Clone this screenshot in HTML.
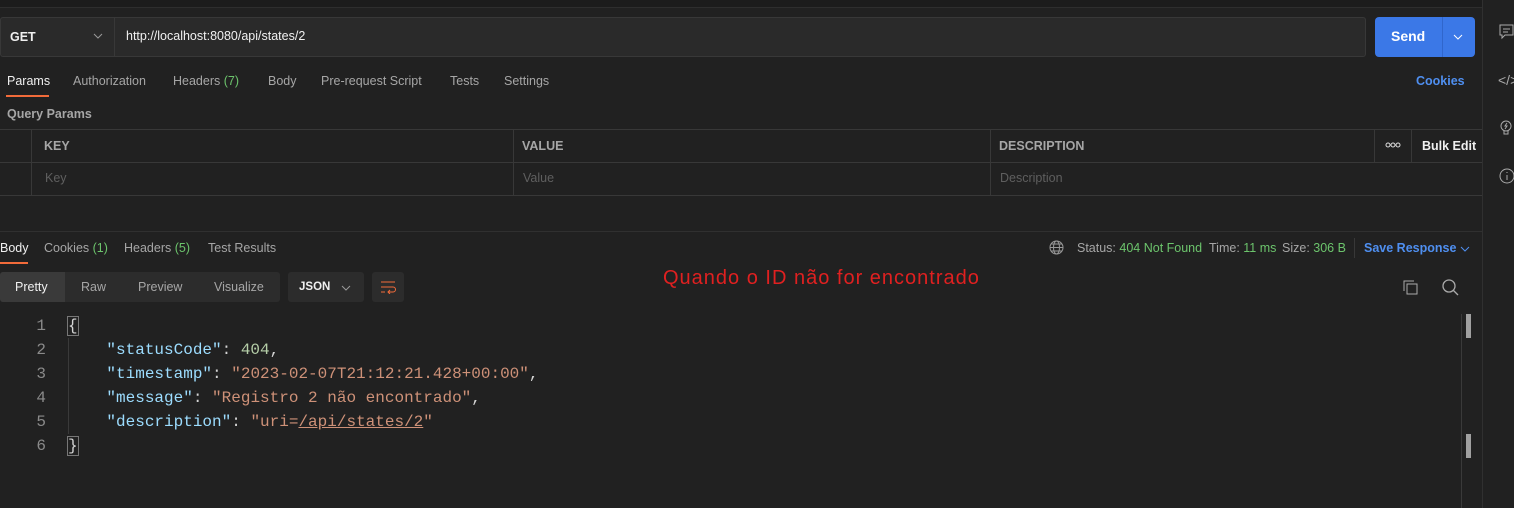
<!DOCTYPE html>
<html><head><meta charset="utf-8"><style>
*{margin:0;padding:0;box-sizing:border-box}
body{width:1514px;height:508px;background:#212121;font-family:"Liberation Sans",sans-serif;color:#a6a6a6;position:relative;overflow:hidden;font-size:12.5px}
.a{position:absolute;white-space:nowrap}
.w{color:#f0f0f0}
.g{color:#6cc46c}
.b{color:#4f8ff0}
.code{font-family:"Liberation Mono",monospace;font-size:16px;color:#9cdcfe}
.ln{color:#8a8a8a;width:46px;text-align:right}
.k{color:#9cdcfe}.s{color:#ce9178}.n{color:#b5cea8}
</style></head><body>
<div class="a" style="left:0;top:0;width:1482px;height:8px;background:#1c1c1c;border-bottom:1px solid #2e2e2e"></div>
<div class="a" style="left:1482px;top:0;width:1px;height:508px;background:#303030"></div>
<div class="a" style="left:0;top:17px;width:1366px;height:40px;background:#2a2a2a;border:1px solid #383838;border-radius:3px"></div>
<div class="a" style="left:114px;top:18px;width:1px;height:38px;background:#383838"></div>
<div class="a w" style="left:10px;top:30px;font-weight:bold;font-size:12.5px">GET</div>
<svg class="a" style="left:93px;top:32px" width="10" height="8"><path d="M1 2l4 4 4-4" stroke="#999" fill="none"/></svg>
<div class="a w" style="left:126px;top:29px;font-size:12.5px">http://localhost:8080/api/states/2</div>
<div class="a" style="left:1375px;top:17px;width:100px;height:40px;background:#3b78e7;border-radius:4px"></div>
<div class="a" style="left:1442px;top:17px;width:1px;height:40px;background:#3066cc"></div>
<div class="a" style="left:1391px;top:28px;color:#fff;font-weight:bold;font-size:14px">Send</div>
<svg class="a" style="left:1453px;top:33px" width="10" height="8"><path d="M1 2l4 4 4-4" stroke="#fff" fill="none"/></svg>
<div class="a w" style="left:7px;top:74px">Params</div>
<div class="a" style="left:6px;top:95px;width:43px;height:2px;background:#f26b3a"></div>
<div class="a" style="left:73px;top:74px">Authorization</div>
<div class="a" style="left:173px;top:74px">Headers <span class="g">(7)</span></div>
<div class="a" style="left:268px;top:74px">Body</div>
<div class="a" style="left:321px;top:74px">Pre-request Script</div>
<div class="a" style="left:450px;top:74px">Tests</div>
<div class="a" style="left:504px;top:74px">Settings</div>
<div class="a b" style="left:1416px;top:74px;font-weight:bold">Cookies</div>
<div class="a" style="left:7px;top:107px;font-weight:bold">Query Params</div>
<div class="a" style="left:0;top:129px;width:1482px;height:67px;border-top:1px solid #383838;border-bottom:1px solid #383838"></div>
<div class="a" style="left:0;top:162px;width:1482px;height:1px;background:#383838"></div>
<div class="a" style="left:31px;top:129px;width:1px;height:67px;background:#383838"></div>
<div class="a" style="left:513px;top:129px;width:1px;height:67px;background:#383838"></div>
<div class="a" style="left:990px;top:129px;width:1px;height:67px;background:#383838"></div>
<div class="a" style="left:1374px;top:129px;width:1px;height:33px;background:#383838"></div>
<div class="a" style="left:1411px;top:129px;width:1px;height:33px;background:#383838"></div>
<div class="a" style="left:44px;top:139px;font-weight:bold">KEY</div>
<div class="a" style="left:522px;top:139px;font-weight:bold">VALUE</div>
<div class="a" style="left:999px;top:139px;font-weight:bold">DESCRIPTION</div>
<svg class="a" style="left:1385px;top:142px" width="16" height="6" stroke="#ddd" fill="none"><circle cx="3" cy="3" r="2"/><circle cx="8" cy="3" r="2"/><circle cx="13" cy="3" r="2"/></svg>
<div class="a w" style="left:1422px;top:139px;font-weight:bold">Bulk Edit</div>
<div class="a" style="left:45px;top:171px;color:#5f5f5f">Key</div>
<div class="a" style="left:523px;top:171px;color:#5f5f5f">Value</div>
<div class="a" style="left:1000px;top:171px;color:#5f5f5f">Description</div>
<div class="a" style="left:0;top:231px;width:1482px;height:1px;background:#303030"></div>
<div class="a w" style="left:0;top:241px">Body</div>
<div class="a" style="left:0;top:262px;width:28px;height:2px;background:#f26b3a"></div>
<div class="a" style="left:44px;top:241px">Cookies <span class="g">(1)</span></div>
<div class="a" style="left:124px;top:241px">Headers <span class="g">(5)</span></div>
<div class="a" style="left:208px;top:241px">Test Results</div>
<svg class="a" style="left:1049px;top:240px" width="15" height="15" stroke="#999" fill="none"><circle cx="7.5" cy="7.5" r="6.5"/><ellipse cx="7.5" cy="7.5" rx="3" ry="6.5"/><path d="M1 7.5h13M2 4h11M2 11h11"/></svg>
<div class="a" style="left:1077px;top:241px">Status: <span class="g">404 Not Found</span></div>
<div class="a" style="left:1209px;top:241px">Time: <span class="g">11 ms</span></div>
<div class="a" style="left:1282px;top:241px">Size: <span class="g">306 B</span></div>
<div class="a" style="left:1354px;top:238px;width:1px;height:20px;background:#383838"></div>
<div class="a b" style="left:1364px;top:241px;font-weight:bold">Save Response</div>
<svg class="a" style="left:1460px;top:245px" width="10" height="8"><path d="M1 2l4 4 4-4" stroke="#4f8ff0" fill="none"/></svg>
<div class="a" style="left:0;top:272px;width:280px;height:30px;background:#2c2c2c;border-radius:3px"></div>
<div class="a" style="left:0;top:272px;width:65px;height:30px;background:#3a3a3a;border-radius:3px 0 0 3px"></div>
<div class="a w" style="left:15px;top:280px">Pretty</div>
<div class="a" style="left:81px;top:280px">Raw</div>
<div class="a" style="left:138px;top:280px">Preview</div>
<div class="a" style="left:214px;top:280px">Visualize</div>
<div class="a" style="left:288px;top:272px;width:76px;height:30px;background:#2c2c2c;border-radius:3px"></div>
<div class="a w" style="left:299px;top:281px;font-weight:bold;font-size:11.5px">JSON</div>
<svg class="a" style="left:341px;top:284px" width="10" height="8"><path d="M1 2l4 4 4-4" stroke="#999" fill="none"/></svg>
<div class="a" style="left:372px;top:272px;width:32px;height:30px;background:#2c2c2c;border-radius:3px"></div>
<svg class="a" style="left:380px;top:280px" width="16" height="14" stroke="#f26b3a" fill="none"><path d="M1 2h14M1 7h12a2.5 2.5 0 0 1 0 5H8M10 10l-2 2 2 2M1 12h4"/></svg>
<div class="a" style="left:663px;top:267px;color:#e02020;font-size:20px;letter-spacing:1px">Quando o ID não for encontrado</div>
<svg class="a" style="left:1403px;top:280px" width="16" height="16" stroke="#aaa" fill="none"><path d="M1 11V1h10"/><rect x="4" y="4" width="10" height="10"/></svg>
<svg class="a" style="left:1442px;top:279px" width="17" height="17" stroke="#aaa" fill="none" stroke-width="1.3"><circle cx="7" cy="7" r="6"/><path d="M11.5 11.5l4.5 4.5"/></svg>
<div class="a code ln" style="left:0;top:314px;line-height:24px">1<br>2<br>3<br>4<br>5<br>6</div>
<div class="a code" style="left:68px;top:314px;line-height:24px;color:#d4d4d4">
<div><span style="outline:1px solid #777">{</span></div>
<div>&nbsp;&nbsp;&nbsp;&nbsp;<span class="k">"statusCode"</span>: <span class="n">404</span>,</div>
<div>&nbsp;&nbsp;&nbsp;&nbsp;<span class="k">"timestamp"</span>: <span class="s">"2023-02-07T21:12:21.428+00:00"</span>,</div>
<div>&nbsp;&nbsp;&nbsp;&nbsp;<span class="k">"message"</span>: <span class="s">"Registro 2 não encontrado"</span>,</div>
<div>&nbsp;&nbsp;&nbsp;&nbsp;<span class="k">"description"</span>: <span class="s">"uri=<u>/api/states/2</u>"</span></div>
<div><span style="outline:1px solid #777">}</span></div>
</div>
<div class="a" style="left:68px;top:338px;width:1px;height:96px;background:#3a3a3a"></div>
<div class="a" style="left:1461px;top:314px;width:1px;height:194px;background:#3a3a3a"></div>
<div class="a" style="left:1466px;top:314px;width:5px;height:24px;background:#a0a0a0"></div>
<div class="a" style="left:1466px;top:434px;width:5px;height:24px;background:#a0a0a0"></div>
<svg class="a" style="left:1499px;top:24px" width="15" height="16" stroke="#aaa" fill="none"><path d="M1 1h13v10H6l-3 3v-3H1z M4 5h7M4 8h5"/></svg>
<div class="a" style="left:1498px;top:72px;color:#aaa;font-size:14px">&lt;/&gt;</div>
<svg class="a" style="left:1498px;top:119px" width="16" height="18" stroke="#aaa" fill="none"><circle cx="8" cy="7" r="5"/><path d="M6 12v3h4v-3M9 4l-2 3h2l-2 3"/></svg>
<svg class="a" style="left:1498px;top:167px" width="16" height="18" stroke="#aaa" fill="none"><circle cx="9" cy="9" r="7"/><path d="M9 8v5M9 5v1"/></svg>
</body></html>
